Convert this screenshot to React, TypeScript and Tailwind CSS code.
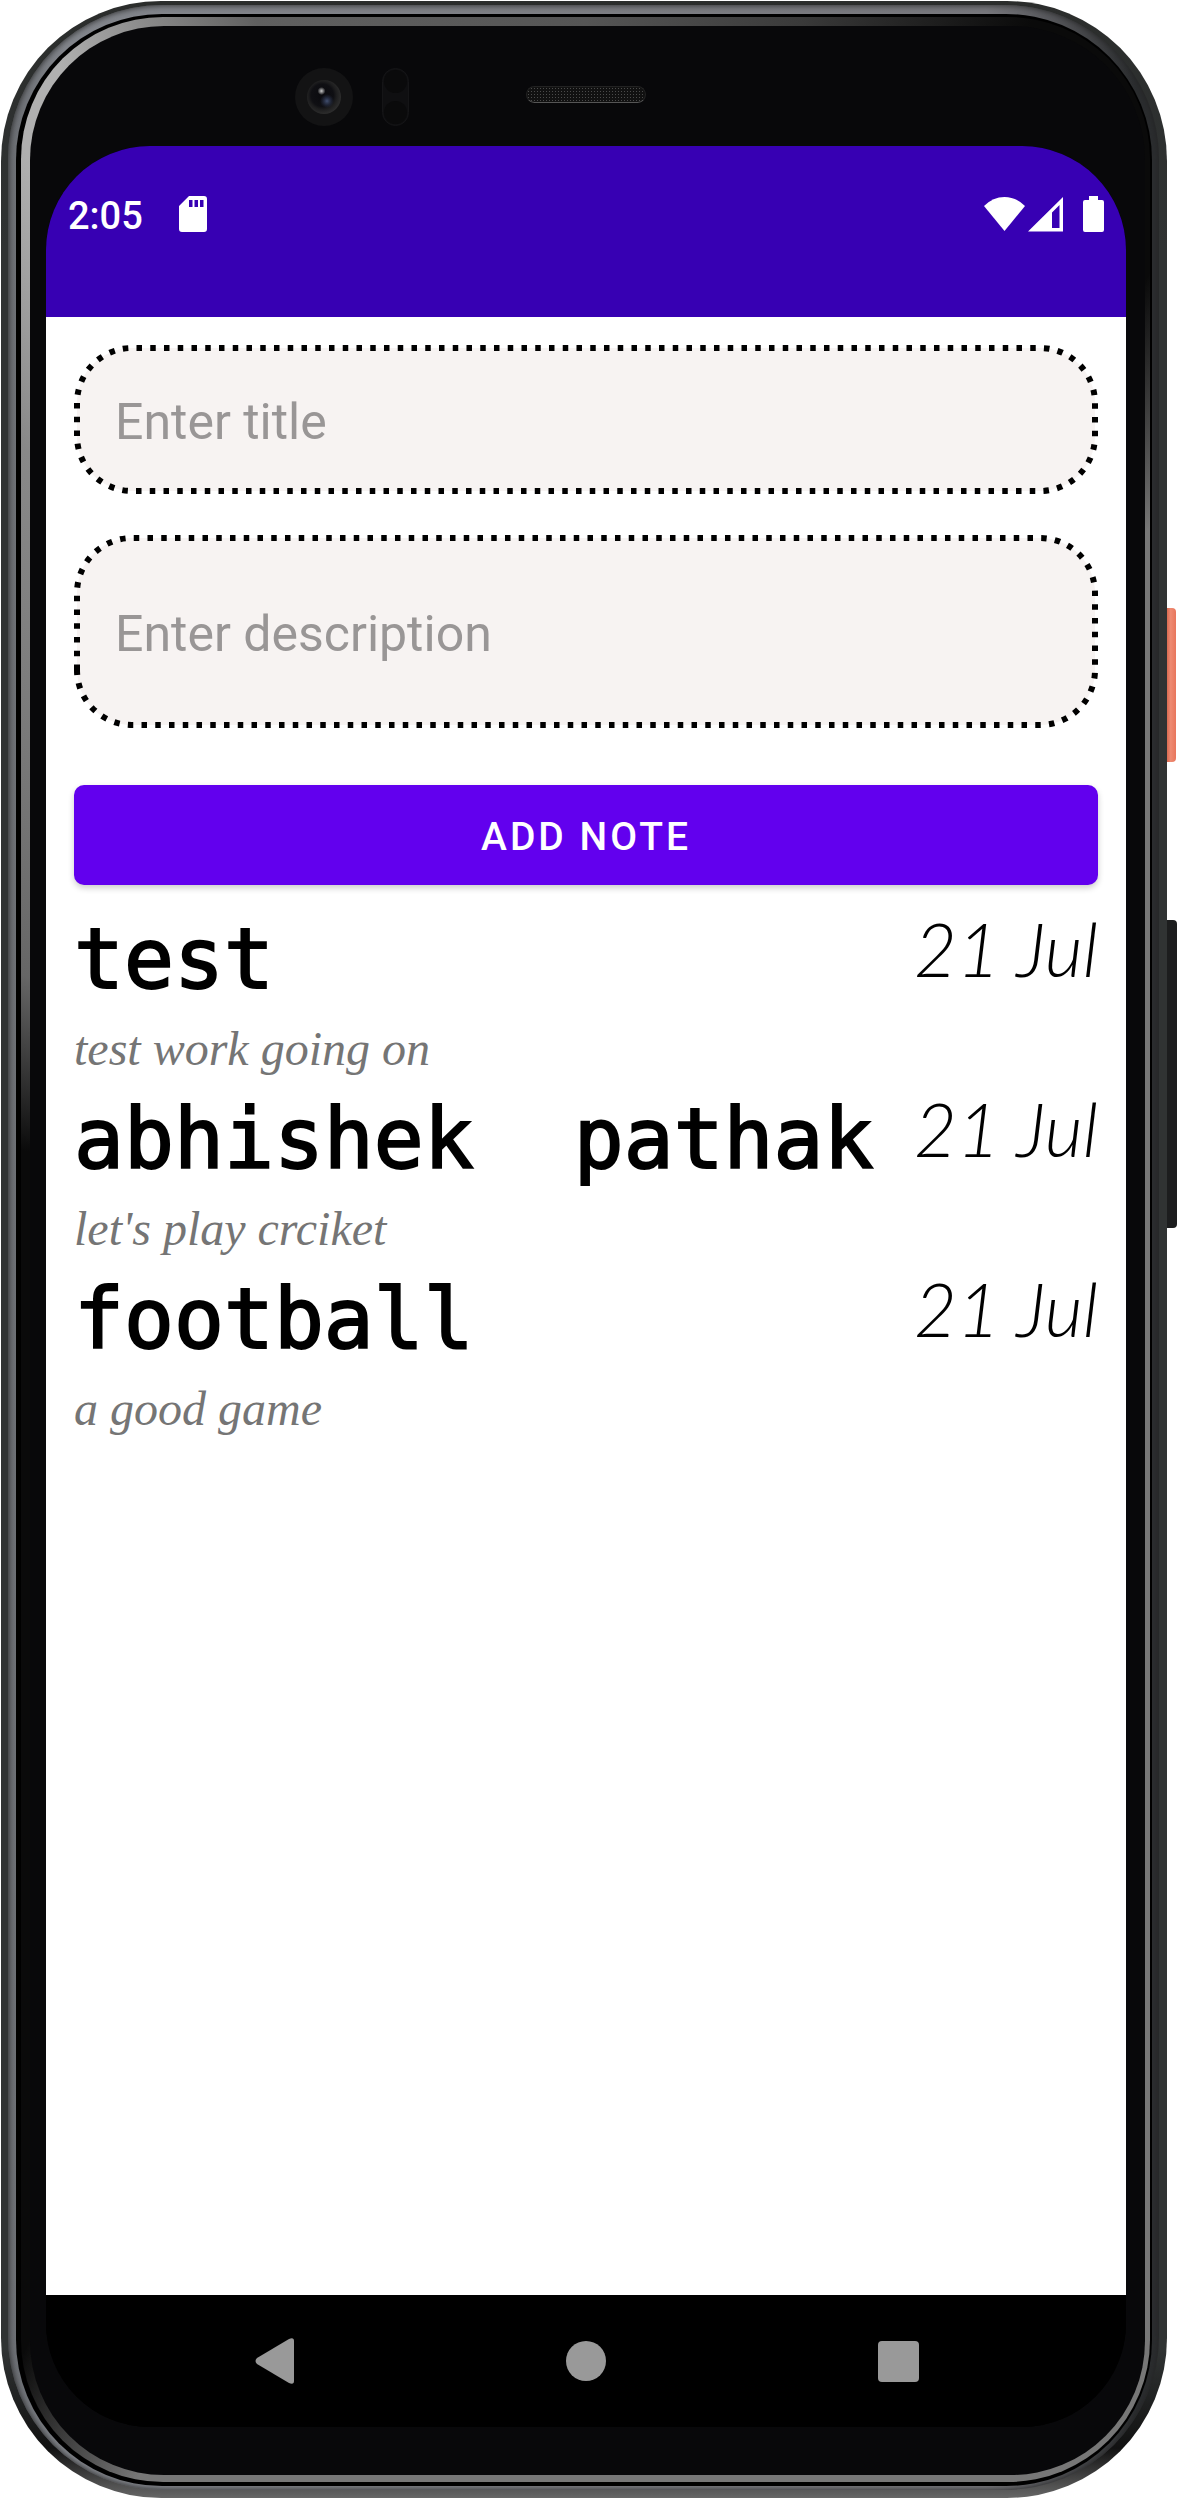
import { useLayoutEffect, useRef, useState } from "react";

const STROKE = 6;
const CORNER = 55;

/** Rounded outline of square dots that follows the size of its parent. */
function DottedOutline() {
  const ref = useRef<SVGSVGElement>(null);
  const [size, setSize] = useState({ w: 0, h: 0 });

  useLayoutEffect(() => {
    const el = ref.current;
    if (!el) return;
    const measure = () => setSize({ w: el.clientWidth, h: el.clientHeight });
    measure();
    const observer = new ResizeObserver(measure);
    observer.observe(el);
    return () => observer.disconnect();
  }, []);

  const a = STROKE / 2;
  const r = size.w - a;
  const b = size.h - a;
  const c = CORNER;
  const d =
    `M${a} ${b - c}V${a + c}A${c} ${c} 0 0 1 ${a + c} ${a}H${r - c}` +
    `A${c} ${c} 0 0 1 ${r} ${a + c}V${b - c}A${c} ${c} 0 0 1 ${r - c} ${b}` +
    `H${a + c}A${c} ${c} 0 0 1 ${a} ${b - c}Z`;

  return (
    <svg ref={ref} className="pointer-events-none absolute inset-0 h-full w-full" aria-hidden="true">
      {size.w > 0 && (
        <path d={d} fill="#f7f3f2" stroke="#000" strokeWidth={STROKE} strokeDasharray="5.5 8.25" />
      )}
    </svg>
  );
}

function Field({ label, tall }: { label: string; tall?: boolean }) {
  return (
    <label className={tall ? "relative block h-[193px]" : "relative block h-[149px]"}>
      <DottedOutline />
      <input
        type="text"
        aria-label={label}
        placeholder={label}
        className="relative h-full w-full bg-transparent px-[41px] pt-1 text-[50px] text-black outline-none placeholder:text-[#999696]"
      />
    </label>
  );
}

const notes = [
  { title: "test", text: "test work going on", date: "21 Jul" },
  { title: "abhishek  pathak", text: "let's play crciket", date: "21 Jul" },
  { title: "football", text: "a good game", date: "21 Jul" },
];

function StatusBar() {
  return (
    <header className="flex h-[171px] items-start justify-between bg-[#3700b3] pt-12 pr-[22px] pl-[22px] text-white">
      <div className="flex items-center gap-9">
        <span className="text-[38px] leading-[44px] font-medium">2:05</span>
        <svg width="28" height="36" viewBox="0 0 28 36" fill="currentColor" className="mb-1" aria-hidden="true">
          <path
            fillRule="evenodd"
            d="M10 0H25Q28 0 28 3V33Q28 36 25 36H3Q0 36 0 33V10ZM10 4V11H13.500V4ZM15.500 4V11H19V4ZM21 4V11H24.500V4Z"
          />
        </svg>
      </div>
      <div className="flex h-[40px] items-center">
        <svg width="120" height="36" viewBox="0 0 120 36" fill="currentColor" aria-hidden="true">
          <path d="M0 10Q9 1 20.500 1T41 10L20.500 35Z" />
          <path fillRule="evenodd" d="M44 35.500L79 1V35.500ZM68 16.500V32H75.500V9Z" />
          <path d="M105 0H114V4H118Q120 4 120 6V34Q120 36 118 36H101Q99 36 99 34V6Q99 4 101 4H105Z" />
        </svg>
      </div>
    </header>
  );
}

function NavBar() {
  return (
    <nav className="flex h-[132px] items-center justify-evenly bg-black text-[#999]">
      <button type="button" aria-label="Back" className="flex w-12 justify-center">
        <svg width="39" height="46" viewBox="0 0 39 46" fill="currentColor" aria-hidden="true">
          <path d="M34 1Q39 -1 39 3V43Q39 47 34 45L2 26Q-1 23 2 20Z" />
        </svg>
      </button>
      <button type="button" aria-label="Home" className="mx-[60px] flex w-12 justify-center">
        <span className="size-10 rounded-full bg-[#999]" />
      </button>
      <button type="button" aria-label="Overview" className="flex w-12 justify-center">
        <span className="size-[41px] rounded-[4px] bg-[#999]" />
      </button>
    </nav>
  );
}

function TopBezel() {
  return (
    <div className="grid h-[120px] grid-cols-[1fr_120px_1fr] items-center pt-[22px]">
      <div className="flex items-center justify-end gap-[29px] pr-[117px]">
        <div className="flex size-[58px] items-center justify-center rounded-full bg-[#131314]">
          <svg width="36" height="36" viewBox="0 0 36 36" aria-hidden="true">
            <defs>
              <radialGradient id="lens" cx="0.45" cy="0.45" r="0.55">
                <stop offset="0" stopColor="#0a0a0e" />
                <stop offset="0.6" stopColor="#0f0f13" />
                <stop offset="0.75" stopColor="#1d1d1e" />
                <stop offset="1" stopColor="#2c2c2c" />
              </radialGradient>
              <radialGradient id="glint">
                <stop offset="0" stopColor="#c8c8c8" />
                <stop offset="1" stopColor="#c8c8c8" stopOpacity="0" />
              </radialGradient>
              <radialGradient id="blue">
                <stop offset="0" stopColor="#425070" />
                <stop offset="1" stopColor="#2c3654" stopOpacity="0" />
              </radialGradient>
            </defs>
            <circle cx="18" cy="18" r="17" fill="url(#lens)" />
            <circle cx="21" cy="22" r="7" fill="url(#blue)" />
            <circle cx="15.500" cy="12" r="4" fill="url(#glint)" />
          </svg>
        </div>
        <div className="flex h-[58px] w-[27px] flex-col items-center justify-between rounded-full border border-[#151517] bg-[#0f0f11] py-px">
          <span className="size-[23px] rounded-full bg-[#0a0a0b]" />
          <span className="size-[23px] rounded-full bg-[#0a0a0b]" />
        </div>
      </div>
      <div className="mb-1.5 h-[17px] rounded-full border border-b-[#555] border-[#222] bg-[#111] bg-[radial-gradient(#4a4a4a_1px,transparent_1px)] bg-size-[3px_3px]" />
    </div>
  );
}

export default function App() {
  return (
    <div className="flex min-h-screen bg-white pt-px pl-px font-['Roboto',sans-serif]">
      <div className="flex flex-1 rounded-[160px] bg-[linear-gradient(#2b2d2c,#303333_10%,#303333_94%,#111_98%,#666)] pt-[4px] pr-[8px] pb-[8px] pl-[7px]">
        <div className="flex flex-1 rounded-[154px] bg-[linear-gradient(90deg,#6a6d72,#83868c_5%,#77777c_85%,#2b2d2f_98%)] pt-[9px] pr-[7px] pb-[4px] pl-[8px] shadow-[inset_0_0_6px_#222]">
          <div className="flex flex-1 rounded-[146px] bg-black pt-[3px] pr-[2px] pb-[4px] pl-[5px]">
            <div className="flex flex-1 rounded-[142px] bg-[conic-gradient(#555,#3a3a3a_10deg,#0a0a0a_20deg,#0a0a0a_30deg,#777_38deg,#777_200deg,#0a0a0a_207deg,#0a0a0a_280deg,#666_296deg,#888_325deg,#b0b0b0_333deg,#b0b0b0_336deg,#606060_345deg,#555)] pt-[9px] pr-[5px] pb-[7px] pl-[9px]">
              <div className="flex flex-1 flex-col rounded-[134px] bg-[#08080a] pr-[19px] pb-12 pl-4">
                <TopBezel />
                <div className="flex flex-1 flex-col overflow-hidden rounded-[104px] bg-black">
                  <StatusBar />
                  <main className="flex flex-1 flex-col bg-white px-7 pt-7">
                    <form className="flex flex-col" onSubmit={(e) => e.preventDefault()}>
                      <div className="flex flex-col gap-[41px]">
                        <Field label="Enter title" />
                        <Field label="Enter description" tall />
                      </div>
                      <button
                        type="submit"
                        className="mt-[57px] h-[100px] rounded-[10px] bg-[#6200ee] pt-1 text-[39px] font-medium tracking-[3px] text-white shadow-[0_3px_6px_rgba(0,0,0,0.2)]"
                      >
                        ADD NOTE
                      </button>
                    </form>
                    <ul>
                      {notes.map((note) => (
                        <li key={note.title} className="h-[180px]">
                          <div className="flex h-[136px] items-start justify-between">
                            <h2 className="pt-[25px] font-['DejaVu_Sans_Mono',monospace] text-[83px] leading-[100px] whitespace-pre text-black [-webkit-text-stroke:2px_black]">
                              {note.title}
                            </h2>
                            <time className="w-[184px] shrink-0 pt-5 font-['Lato',sans-serif] text-[74px] leading-[88px] font-light whitespace-nowrap text-black italic">
                              {note.date}
                            </time>
                          </div>
                          <p className="font-['Liberation_Serif',serif] text-[48px] leading-[56px] text-[#757575] italic">
                            {note.text}
                          </p>
                        </li>
                      ))}
                    </ul>
                  </main>
                  <NavBar />
                </div>
              </div>
            </div>
          </div>
        </div>
      </div>
      <div className="flex w-[11px] flex-col gap-[158px] pt-[607px]" aria-hidden="true">
        <div className="h-[154px] w-[9px] rounded-r-[4px] bg-[linear-gradient(90deg,#d96a50,#ee8a72_40%,#e8765c)]" />
        <div className="h-[308px] w-[10px] rounded-r-[4px] bg-[#1c1d1e]" />
      </div>
    </div>
  );
}
